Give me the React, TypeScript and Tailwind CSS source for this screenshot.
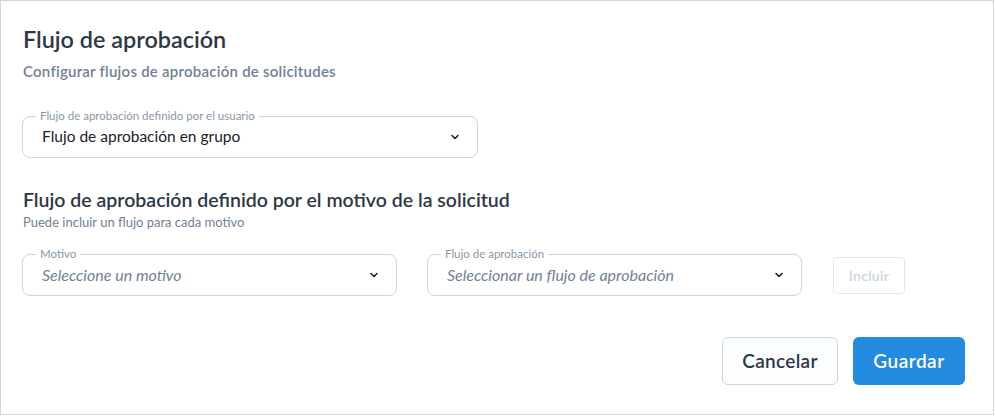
import React from "react";

const font = { fontFamily: "Lato, 'Noto Sans', sans-serif" };

function Chevron() {
  return (
    <svg width="12" height="12" viewBox="0 0 12 12" fill="none" className="shrink-0">
      <path d="M3 4.5 L6 7.5 L9 4.5" stroke="#1a202c" strokeWidth="1.6" strokeLinecap="round" strokeLinejoin="round" />
    </svg>
  );
}

function FloatSelect({
  label,
  value,
  placeholder,
  className,
}: {
  label: string;
  value?: string;
  placeholder?: string;
  className?: string;
}) {
  return (
    <div className={"relative " + (className ?? "")}>
      <div className="flex h-[42px] items-center justify-between rounded-lg border border-[#cbd5e0] bg-white pl-[19px] pr-[16px]">
        {value ? (
          <span className="text-[15.5px] text-[#1a202c]">{value}</span>
        ) : (
          <span className="text-[16px] italic text-[#718096]">{placeholder}</span>
        )}
        <Chevron />
      </div>
      <span className="absolute left-[14px] top-[-7px] bg-white px-[4px] text-[11.5px] leading-[13px] text-[#8a97a8]">
        {label}
      </span>
    </div>
  );
}

export default function App() {
  return (
    <div style={font} className="h-[415px] w-[994px] border border-[#d6d6d6] bg-white">
      <div className="pl-[21px] pr-[22px] pt-[24px]">
        <h1 className="pl-[1px] text-[23.4px] font-semibold leading-[28px] text-[#2d3748]">Flujo de aprobación</h1>
        <p className="mt-[9px] pl-[1px] text-[15px] font-semibold leading-[18px] tracking-[0.24px] text-[#718096]">
          Configurar flujos de aprobación de solicitudes
        </p>

        <FloatSelect
          className="mt-[36px] w-[456px]"
          label="Flujo de aprobación definido por el usuario"
          value="Flujo de aprobación en grupo"
        />

        <h2 className="mt-[30px] pl-[1px] text-[19.5px] font-semibold leading-[24px] text-[#2d3748]">
          Flujo de aprobación definido por el motivo de la solicitud
        </h2>
        <p className="mt-[2px] pl-[1px] text-[13px] leading-[17px] text-[#718096]">Puede incluir un flujo para cada motivo</p>

        <div className="mt-[23px] flex items-center">
          <FloatSelect className="w-[375px]" label="Motivo" placeholder="Seleccione un motivo" />
          <FloatSelect className="ml-[30px] w-[375px]" label="Flujo de aprobación" placeholder="Seleccionar un flujo de aprobación" />
          <button className="ml-[31px] h-[37px] w-[72px] rounded border border-[#e2e8f0] bg-white text-[14px] font-semibold tracking-[0.3px] text-[#cbd5e0]">
            Incluir
          </button>
        </div>

        <div className="mt-[41px] flex justify-end pr-[6px]">
          <button className="h-[48px] w-[116px] rounded-md border border-[#cbd5e0] bg-[#fbfdfe] text-[19px] font-semibold tracking-[0.3px] text-[#2d3748]">
            Cancelar
          </button>
          <button className="ml-[15px] h-[48px] w-[112px] rounded-md bg-[#228be0] text-[19px] font-semibold tracking-[0.5px] text-white">
            Guardar
          </button>
        </div>
      </div>
    </div>
  );
}
